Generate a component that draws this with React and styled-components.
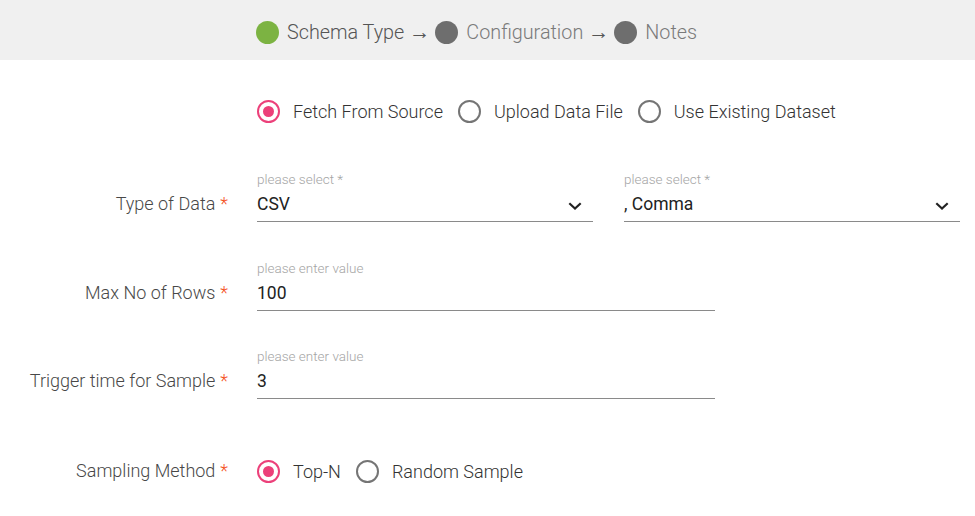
import React, { useState } from "react";
import styled, { createGlobalStyle } from "styled-components";

const GlobalStyle = createGlobalStyle`
  body {
    margin: 0;
    background: #fff;
    font-family: Roboto, "Liberation Sans", sans-serif;
    color: #333;
  }
`;

const Page = styled.div`
  width: 975px;
  height: 516px;
  overflow: hidden;
  background: #fff;
`;

const StepBar = styled.div`
  box-sizing: border-box;
  height: 60px;
  padding: 4px 0 0 256px;
  background: #f0f0f0;
  display: flex;
  align-items: center;
  font-size: 19.8px;
  font-weight: 300;
`;

const Step = styled.div`
  display: flex;
  align-items: center;
  gap: 8px;
  color: ${(p) => (p.$active ? "#555" : "#7a7a7a")};
`;

const StepDot = styled.span`
  width: 23px;
  height: 23px;
  border-radius: 50%;
  background: ${(p) => (p.$active ? "#7cb342" : "#6e6e6e")};
`;

const Arrow = styled.span`
  margin: 0 5px 0 5px;
  font-size: 21px;
  color: #555;
`;

const Form = styled.div`
  padding: 39px 15px 0 0;
`;

const Row = styled.div`
  display: grid;
  grid-template-columns: 228px 1fr;
  column-gap: 29px;
  margin-top: ${(p) => p.$gap || 0}px;
`;

const Label = styled.div`
  text-align: right;
  font-size: 18px;
  font-weight: 300;
  color: #484848;
  line-height: 24px;
  padding-top: ${(p) => p.$offset || 0}px;
  white-space: nowrap;
`;

const Required = styled.span`
  color: #f4511e;
  margin-left: 5px;
`;

const RadioGroup = styled.div`
  display: flex;
  align-items: center;
  gap: 15px;
  height: 24px;
`;

const RadioOption = styled.label`
  display: flex;
  align-items: center;
  gap: 13px;
  font-size: 18px;
  font-weight: 300;
  color: #333;
  cursor: pointer;
`;

const RadioCircle = styled.span`
  box-sizing: border-box;
  width: 23px;
  height: 23px;
  border-radius: 50%;
  border: 2.5px solid ${(p) => (p.$checked ? "#ec407a" : "#757575")};
  display: flex;
  align-items: center;
  justify-content: center;
  &::after {
    content: "";
    width: 11px;
    height: 11px;
    border-radius: 50%;
    background: ${(p) => (p.$checked ? "#ec407a" : "transparent")};
  }
`;

const Fields = styled.div`
  display: grid;
  grid-template-columns: 1fr 1fr;
  column-gap: 31px;
`;

const Field = styled.div`
  width: ${(p) => (p.$width ? `${p.$width}px` : "auto")};
  display: flex;
  flex-direction: column;
`;

const Helper = styled.div`
  font-size: 13.5px;
  font-weight: 300;
  line-height: 16px;
  color: #a5a5a5;
`;

const ValueRow = styled.div`
  margin-top: 5px;
  height: 24px;
  padding-bottom: 5px;
  border-bottom: 1px solid #8a8a8a;
  display: flex;
  align-items: center;
  justify-content: space-between;
  font-size: 17.5px;
  color: #222;
`;

const Chevron = styled.svg`
  margin: 3px 11px 0 0;
`;

const Radio = ({ checked, label, onSelect }) => (
  <RadioOption onClick={onSelect}>
    <RadioCircle $checked={checked} />
    {label}
  </RadioOption>
);

const Select = ({ value }) => (
  <Field>
    <Helper>please select *</Helper>
    <ValueRow>
      <span>{value}</span>
      <Chevron width="14" height="8" viewBox="0 0 14 8">
        <path d="M1.3 1.3 L7 6.5 L12.7 1.3" fill="none" stroke="#222" strokeWidth="2.2" />
      </Chevron>
    </ValueRow>
  </Field>
);

const TextField = ({ value }) => (
  <Field $width={458}>
    <Helper>please enter value</Helper>
    <ValueRow>{value}</ValueRow>
  </Field>
);

const sources = ["Fetch From Source", "Upload Data File", "Use Existing Dataset"];
const methods = ["Top-N", "Random Sample"];

export default function App() {
  const [source, setSource] = useState(sources[0]);
  const [method, setMethod] = useState(methods[0]);

  return (
    <Page>
      <GlobalStyle />
      <StepBar>
        <Step $active>
          <StepDot $active />
          Schema Type
        </Step>
        <Arrow>→</Arrow>
        <Step>
          <StepDot />
          Configuration
        </Step>
        <Arrow>→</Arrow>
        <Step>
          <StepDot />
          Notes
        </Step>
      </StepBar>

      <Form>
        <Row>
          <div />
          <RadioGroup>
            {sources.map((s) => (
              <Radio key={s} label={s} checked={source === s} onSelect={() => setSource(s)} />
            ))}
          </RadioGroup>
        </Row>

        <Row $gap={48}>
          <Label $offset={21}>
            Type of Data<Required>*</Required>
          </Label>
          <Fields>
            <Select value="CSV" />
            <Select value=", Comma" />
          </Fields>
        </Row>

        <Row $gap={38}>
          <Label $offset={21}>
            Max No of Rows<Required>*</Required>
          </Label>
          <TextField value="100" />
        </Row>

        <Row $gap={37}>
          <Label $offset={21}>
            Trigger time for Sample<Required>*</Required>
          </Label>
          <TextField value="3" />
        </Row>

        <Row $gap={60}>
          <Label>
            Sampling Method<Required>*</Required>
          </Label>
          <RadioGroup>
            {methods.map((m) => (
              <Radio key={m} label={m} checked={method === m} onSelect={() => setMethod(m)} />
            ))}
          </RadioGroup>
        </Row>
      </Form>
    </Page>
  );
}
